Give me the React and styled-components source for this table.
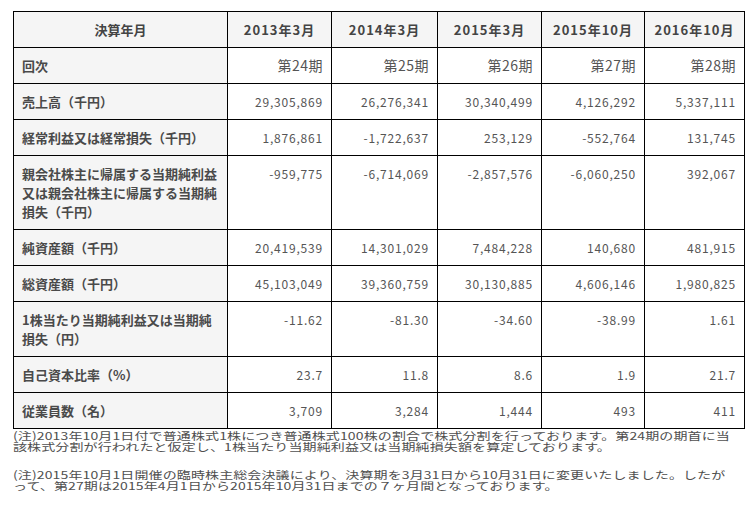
import React from 'react'
import styled, { createGlobalStyle } from 'styled-components'

const years = ['2013年3月', '2014年3月', '2015年3月', '2015年10月', '2016年10月']

const rows = [
  { label: '回次', values: ['第24期', '第25期', '第26期', '第27期', '第28期'], period: true },
  { label: '売上高（千円）', values: ['29,305,869', '26,276,341', '30,340,499', '4,126,292', '5,337,111'] },
  { label: '経常利益又は経常損失（千円）', values: ['1,876,861', '-1,722,637', '253,129', '-552,764', '131,745'] },
  {
    label: '親会社株主に帰属する当期純利益又は親会社株主に帰属する当期純損失（千円）',
    values: ['-959,775', '-6,714,069', '-2,857,576', '-6,060,250', '392,067'],
  },
  { label: '純資産額（千円）', values: ['20,419,539', '14,301,029', '7,484,228', '140,680', '481,915'] },
  { label: '総資産額（千円）', values: ['45,103,049', '39,360,759', '30,130,885', '4,606,146', '1,980,825'] },
  { label: '1株当たり当期純利益又は当期純損失（円）', values: ['-11.62', '-81.30', '-34.60', '-38.99', '1.61'] },
  { label: '自己資本比率（%）', values: ['23.7', '11.8', '8.6', '1.9', '21.7'] },
  { label: '従業員数（名）', values: ['3,709', '3,284', '1,444', '493', '411'] },
]

// widths measured border to border
const colWidths = [214, 104, 106, 104, 103, 100]

const notes = [
  [
    '(注)2013年10月1日付で普通株式1株につき普通株式100株の割合で株式分割を行っております。第24期の期首に当',
    '該株式分割が行われたと仮定し、1株当たり当期純利益又は当期純損失額を算定しております。',
  ],
  [
    '(注)2015年10月1日開催の臨時株主総会決議により、決算期を3月31日から10月31日に変更いたしました。したが',
    'って、第27期は2015年4月1日から2015年10月31日までの７ヶ月間となっております。',
  ],
]

export default function App() {
  return (
    <>
      <GlobalStyle />
      <Page>
        <Table>
          <colgroup>
            {colWidths.map((w, i) => (
              <col key={i} style={{ width: w }} />
            ))}
          </colgroup>
          <thead>
            <tr>
              <HeadCell>決算年月</HeadCell>
              {years.map((y) => (
                <HeadCell key={y} $year>
                  {y}
                </HeadCell>
              ))}
            </tr>
          </thead>
          <tbody>
            {rows.map((r) => (
              <tr key={r.label}>
                <LabelCell scope="row">{r.label}</LabelCell>
                {r.values.map((v, i) => (
                  <ValueCell key={i} $period={r.period}>
                    {v}
                  </ValueCell>
                ))}
              </tr>
            ))}
          </tbody>
        </Table>
        <Notes>
          {notes.map((lines, i) => (
            <Note key={i}>
              {lines.map((l, j) => (
                <NoteLine key={j}>{l}</NoteLine>
              ))}
            </Note>
          ))}
        </Notes>
      </Page>
    </>
  )
}

const GlobalStyle = createGlobalStyle`
  body{
    margin:0;
    background:#fff;
    font-family: "Noto Sans CJK JP", "Noto Sans", sans-serif;
  }
`

const Page = styled.div`
  width: 731px;
  padding: 11px 0 0 13px;
`

const Table = styled.table`
  width: 731px;
  table-layout: fixed;
  border-collapse: collapse;
  border: 1px solid #000;
`

const Cell = styled.td`
  border: 1px solid #000;
  padding: 8px 8px;
  line-height: 19px;
  vertical-align: top;
`

const HeadCell = styled(Cell).attrs({ as: 'th' })`
  background: #f5f5f5;
  color: #444;
  font-size: 13px;
  font-weight: 700;
  letter-spacing: ${(p) => (p.$year ? '1px' : '0')};
  text-align: center;
`

const LabelCell = styled(Cell).attrs({ as: 'th' })`
  background: #f5f5f5;
  color: #4a4a4a;
  font-size: 13px;
  font-weight: 700;
  text-align: left;
`

const ValueCell = styled(Cell)`
  color: #555;
  font-size: ${(p) => (p.$period ? '14px' : '12px')};
  letter-spacing: ${(p) => (p.$period ? '0.5px' : '0.8px')};
  text-align: right;
`

// the notes read wide and flat in the source, so squash them vertically
const Notes = styled.div`
  margin-top: 1px;
  color: #4f4f4f;
  font-size: 14px;
  line-height: 14px;
  letter-spacing: 0.12px;
  transform: scaleY(0.77);
  transform-origin: top left;
`

const Note = styled.p`
  margin: 0 0 23px;
`

const NoteLine = styled.span`
  display: block;
  white-space: nowrap;
`
